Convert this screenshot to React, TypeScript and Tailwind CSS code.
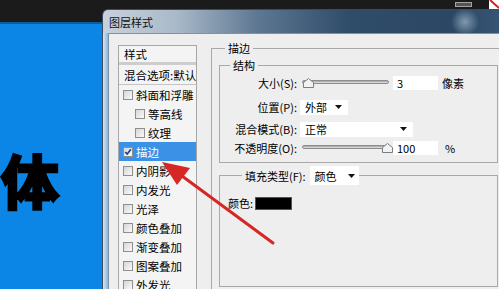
import type { ReactNode } from "react"

const items: { label: string; indent?: boolean; checked?: boolean }[] = [
  { label: "斜面和浮雕" },
  { label: "等高线", indent: true },
  { label: "纹理", indent: true },
  { label: "描边", checked: true },
  { label: "内阴影" },
  { label: "内发光" },
  { label: "光泽" },
  { label: "颜色叠加" },
  { label: "渐变叠加" },
  { label: "图案叠加" },
  { label: "外发光" },
]

function Check({ checked }: { checked?: boolean }) {
  return (
    <span className="flex h-[10px] w-[10px] shrink-0 items-center justify-center border border-[#8e8f8f] bg-linear-to-br from-[#d6d6d6] to-[#fafafa]">
      {checked ? (
        <svg viewBox="0 0 10 10" className="h-[8px] w-[8px]">
          <path d="M1.5 5 L4 7.6 L8.6 1.6" stroke="#1d3b8f" strokeWidth="2" fill="none" />
        </svg>
      ) : null}
    </span>
  )
}

function Caret() {
  return (
    <svg width="7" height="4" viewBox="0 0 7 4" className="shrink-0">
      <path d="M0 0H7L3.5 4Z" fill="#111" />
    </svg>
  )
}

function Slider({ at }: { at: "start" | "end" }) {
  return (
    <div className="relative h-[16px] w-[89px]">
      <div className="absolute left-[2px] right-0 top-[5px] h-[4px] rounded-full border border-[#8d8d8d] bg-linear-to-b from-[#9f9f9f] to-[#e9e9e9]" />
      <svg
        viewBox="0 0 11 10"
        className={at === "start" ? "absolute left-[3px] top-[3px] h-[10px] w-[11px]" : "absolute right-[-4px] top-[3px] h-[10px] w-[11px]"}
      >
        <path d="M0.5 4.5 L5.5 0.5 L10.5 4.5 V9.5 H0.5 Z" fill="#f2f2f2" stroke="#7d7d7d" />
      </svg>
    </div>
  )
}

function Row({ label, mt, children }: { label: string; mt: string; children: ReactNode }) {
  return (
    <div className={`flex h-[16px] items-center ${mt}`}>
      <span className="w-[77px] shrink-0 whitespace-nowrap text-right">{label}</span>
      <div className="ml-[3px] flex items-center">{children}</div>
    </div>
  )
}

function Box({ value, w }: { value: string; w: string }) {
  return <div className={`flex h-[14px] items-center bg-white pl-[4px] ${w}`}>{value}</div>
}

function Select({ value, w }: { value: string; w: string }) {
  return (
    <div className={`flex h-[15px] items-center justify-between bg-white pl-[5px] pr-[6px] ${w}`}>
      <span>{value}</span>
      <Caret />
    </div>
  )
}

export default function App() {
  return (
    <div className="relative h-[289px] w-[499px] overflow-hidden bg-[#0b86e6] font-['Noto_Sans_CJK_SC',sans-serif] text-[11px] leading-[14px] text-black">
      <div className="flex h-full flex-col">
        <div className="flex h-[22px] shrink-0 items-start justify-end bg-[#1b1b1b]">
          <div className="mr-[17px] mt-[2px] h-[5px] w-[17px] border border-[#a3a3a3] bg-[#555]" />
          <div className="h-[9px] w-[10px] bg-white">
            <svg viewBox="0 0 10 9" className="h-[9px] w-[10px]">
              <path d="M1 0 L10 8" stroke="#d02020" strokeWidth="2" />
            </svg>
          </div>
        </div>
        <div className="h-[2px] shrink-0 bg-[#0d5c98]" />
        <div className="flex-1 overflow-hidden pt-[126px]">
          <div className="-ml-[57px] whitespace-nowrap text-[58px] font-bold leading-[58px] text-black [-webkit-text-stroke:3px_black]">
            字体
          </div>
        </div>
      </div>

      <div className="absolute left-[102px] top-[9px] flex h-[320px] w-[410px] flex-col rounded-tl-[6px] border-l border-t border-[#3a4c5f]">
        <div className="flex h-[23px] shrink-0 items-center rounded-tl-[5px] bg-[radial-gradient(circle_at_362px_12px,#8199b2_0,transparent_14px),linear-gradient(90deg,#c9d2db_0%,#a9b9c9_18%,#5d7791_38%,#2f4c69_60%,#2b4763_85%,#3a5776_100%)] pl-[6px] text-[11px] text-[#111]">
          图层样式
        </div>
        <div className="flex min-h-0 flex-1">
          <div className="w-[5px] shrink-0 bg-linear-to-r from-[#d9e7f4] to-[#86b6e2]" />
          <div className="flex flex-1 items-start overflow-hidden border-l border-t border-[#7f92a5] bg-[#eeeeee] pl-[9px] pt-[7px]">
            <div className="mt-[4px] flex h-[270px] w-[79px] shrink-0 flex-col border border-[#a7a7a7] bg-[#f4f4f4] text-[11.5px]">
              <div className="flex h-[16px] shrink-0 items-center pl-[5px]">样式</div>
              <div className="h-[3px] shrink-0 bg-[#cdcdcd]" />
              <div className="flex h-[20px] shrink-0 items-center whitespace-nowrap border-b border-[#c4c4c4] pl-[5px]">混合选项:默认</div>
              {items.map((it) => (
                <div
                  key={it.label}
                  className={`flex h-[19px] shrink-0 items-center gap-[3px] whitespace-nowrap ${it.indent ? "pl-[16px]" : "pl-[4px]"} ${it.checked ? "bg-[#3b91e6] text-white" : ""}`}
                >
                  <Check checked={it.checked} />
                  <span>{it.label}</span>
                </div>
              ))}
            </div>

            <div className="ml-[14px] shrink-0">
              <fieldset className="w-[300px] border border-[#a9a9a9] p-0 pb-[20px]">
                <legend className="ml-[13px] px-[3px] leading-[14px]">描边</legend>
                <div className="pl-[7px] pt-[3px]">
                  <fieldset className="w-[279px] border border-[#a9a9a9] p-0">
                    <legend className="ml-[10px] px-[3px] leading-[14px]">结构</legend>
                    <div className="flex flex-col pb-[6px]">
                      <Row label="大小(S):" mt="mt-[3px]">
                        <Slider at="start" />
                        <div className="ml-[4px]">
                          <Box value="3" w="w-[45px]" />
                        </div>
                        <span className="ml-[4px]">像素</span>
                      </Row>
                      <Row label="位置(P):" mt="mt-[8px]">
                        <Select value="外部" w="w-[48px]" />
                      </Row>
                      <Row label="混合模式(B):" mt="mt-[6px]">
                        <Select value="正常" w="w-[113px]" />
                      </Row>
                      <Row label="不透明度(O):" mt="mt-[3px]">
                        <Slider at="end" />
                        <div className="ml-[4px]">
                          <Box value="100" w="w-[45px]" />
                        </div>
                        <span className="ml-[7px]">%</span>
                      </Row>
                    </div>
                  </fieldset>

                  <fieldset className="mt-[3px] w-[279px] border border-[#a9a9a9] p-0">
                    <legend className="ml-[22px] flex h-[19px] items-center">
                      <span className="px-[3px]">填充类型(F):</span>
                      <div className="ml-[1px] flex h-[19px] w-[49px] items-center justify-between bg-white pl-[5px] pr-[4px]">
                        <span>颜色</span>
                        <Caret />
                      </div>
                    </legend>
                    <div className="mt-[11px] flex h-[14px] items-center pl-[8px]">
                      <span>颜色:</span>
                      <div className="ml-[2px] h-[13px] w-[37px] border border-[#555] bg-black" />
                    </div>
                    <div className="h-[76px]" />
                  </fieldset>
                </div>
              </fieldset>
            </div>
          </div>
        </div>
      </div>

      <svg className="pointer-events-none absolute left-0 top-0 h-[289px] w-[499px]" viewBox="0 0 499 289">
        <line x1="273" y1="243" x2="182" y2="176" stroke="#d62626" strokeWidth="3" strokeLinecap="round" />
        <path d="M162 162 L190 168 L177 185 Z" fill="#d62626" />
      </svg>
    </div>
  )
}
